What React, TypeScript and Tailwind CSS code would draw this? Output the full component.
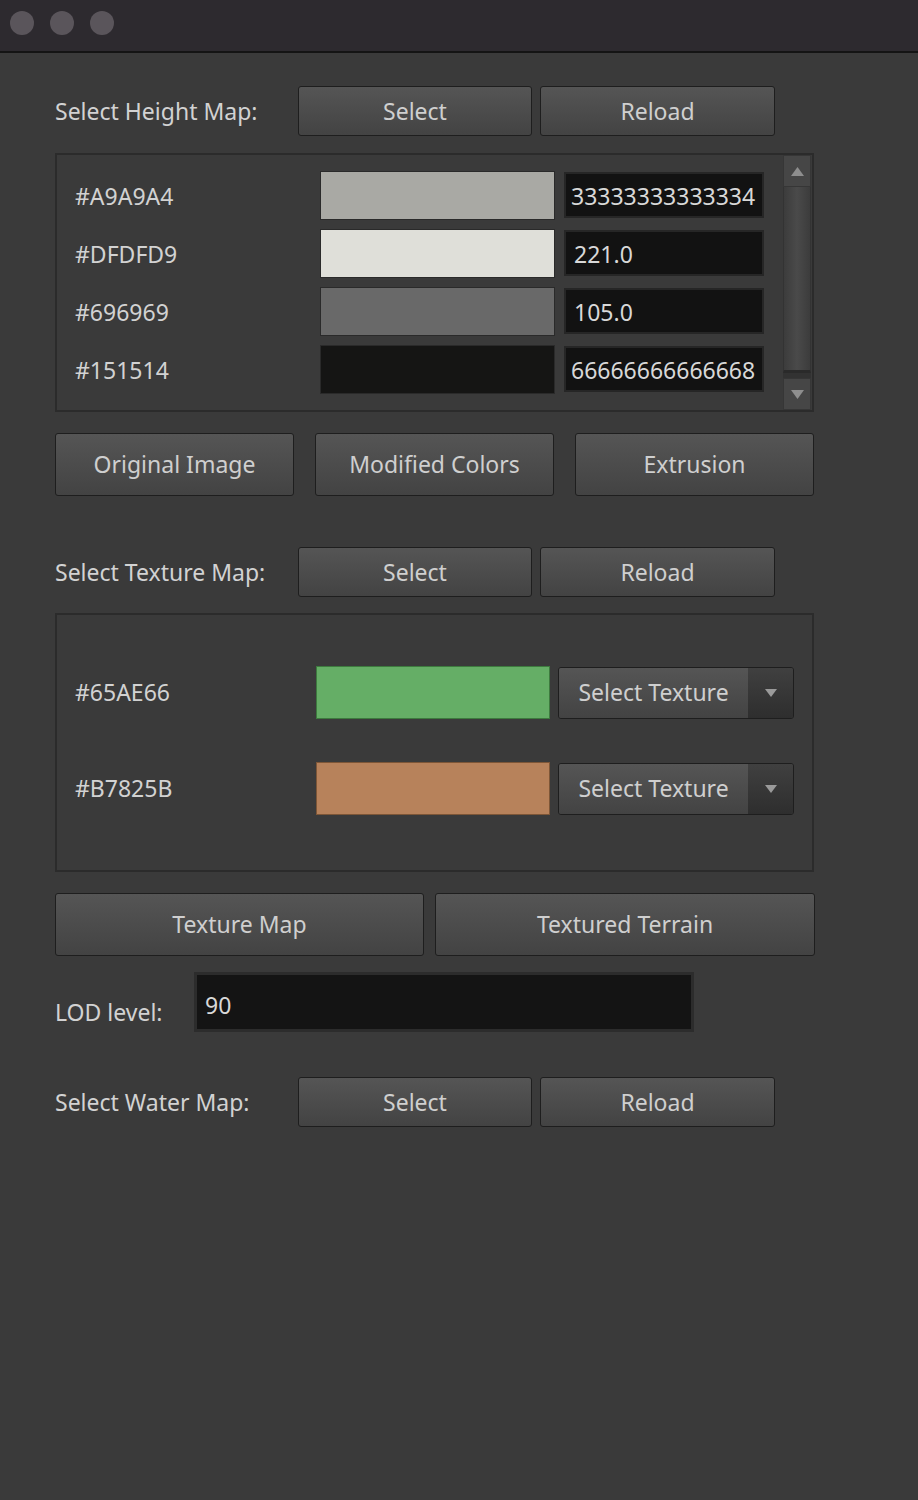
import React from "react";

const font = { fontFamily: '"Source Sans Pro", "Noto Sans", "Open Sans", sans-serif' };

function Btn({ children, className = "" }: { children: React.ReactNode; className?: string }) {
  return (
    <div
      className={`flex items-center justify-center rounded-[3px] border border-[#1e1e1e] bg-gradient-to-b from-[#555555] to-[#434343] text-[#cfcfcf] text-[23px] ${className}`}
    >
      {children}
    </div>
  );
}

function SelectRow({ label }: { label: string }) {
  return (
    <div className="flex items-center">
      <div className="w-[243px] text-[23px] text-[#d2d2d2]">{label}</div>
      <Btn className="w-[234px] h-[50px]">Select</Btn>
      <Btn className="ml-[8px] w-[235px] h-[50px]">Reload</Btn>
    </div>
  );
}

function HeightRow({ hex, color, value, padLeft }: { hex: string; color: string; value: string; padLeft: string }) {
  return (
    <div className="flex items-center h-[58px]">
      <div className="w-[263px] pl-[18px] pt-[2px] text-[23px] text-[#d2d2d2]">{hex}</div>
      <div className="w-[235px] h-[49px] border border-[#2a2a2a]" style={{ backgroundColor: color }} />
      <div className={`ml-[9px] w-[200px] h-[46px] border-[2px] border-[#262626] bg-[#121212] flex items-center ${padLeft} pt-[2px] text-[23px] text-[#d8d8d8] overflow-hidden whitespace-nowrap`}>
        {value}
      </div>
    </div>
  );
}

function TextureRow({ hex, color, border }: { hex: string; color: string; border: string }) {
  return (
    <div className="flex items-center h-[53px]">
      <div className="w-[259px] pl-[18px] text-[23px] text-[#d2d2d2]">{hex}</div>
      <div className={`w-[234px] h-[53px] border ${border}`} style={{ backgroundColor: color }} />
      <div className="ml-[8px] w-[236px] h-[52px] rounded-[3px] border border-[#1e1e1e] flex overflow-hidden">
        <div className="flex-1 flex items-center justify-center bg-gradient-to-b from-[#555555] to-[#434343] text-[23px] text-[#cfcfcf]">
          Select Texture
        </div>
        <div className="w-[45px] flex items-center justify-center bg-gradient-to-b from-[#404040] to-[#2e2e2e]">
          <svg width="14" height="10" viewBox="0 0 14 10">
            <path d="M1 1 L13 1 L7 9 Z" fill="#9a9a9a" />
          </svg>
        </div>
      </div>
    </div>
  );
}

export default function App() {
  return (
    <div className="w-[918px] h-[1500px] bg-[#3a3a3a] flex flex-col" style={font}>
      <div className="h-[53px] bg-[#2d2a2f] border-b-[2px] border-[#141414] flex items-start pt-[11px] pl-[10px] gap-[16px]">
        <div className="w-[24px] h-[24px] rounded-full bg-[#5a555b]" />
        <div className="w-[24px] h-[24px] rounded-full bg-[#5a555b]" />
        <div className="w-[24px] h-[24px] rounded-full bg-[#5a555b]" />
      </div>

      <div className="pl-[55px] flex flex-col">
        <div className="mt-[33px]">
          <SelectRow label="Select Height Map:" />
        </div>

        <div className="mt-[17px] w-[759px] h-[259px] border-[2px] border-[#2b2b2b] flex">
          <div className="flex-1 flex flex-col pt-[11px]">
            <HeightRow hex="#A9A9A4" color="#a9a9a4" value="33333333333334" padLeft="pl-[5px]" />
            <HeightRow hex="#DFDFD9" color="#dfdfd9" value="221.0" padLeft="pl-[8px]" />
            <HeightRow hex="#696969" color="#696969" value="105.0" padLeft="pl-[8px]" />
            <HeightRow hex="#151514" color="#151514" value="66666666666668" padLeft="pl-[5px]" />
          </div>
          <div className="w-[28px] mr-[1px] flex flex-col bg-[#323232]">
            <div className="h-[32px] bg-[#464646] border border-[#363636] flex items-center justify-center">
              <svg width="15" height="11" viewBox="0 0 15 11">
                <path d="M7.5 1 L14 10 L1 10 Z" fill="#8e8e8e" />
              </svg>
            </div>
            <div className="h-[186px] bg-gradient-to-r from-[#3c3c3c] via-[#4a4a4a] to-[#3c3c3c] border-x border-[#333] border-b-[3px] border-b-[#2a2a2a]" />
            <div className="flex-1" />
            <div className="h-[32px] bg-[#464646] border border-[#363636] flex items-center justify-center">
              <svg width="15" height="11" viewBox="0 0 15 11">
                <path d="M1 1 L14 1 L7.5 10 Z" fill="#8e8e8e" />
              </svg>
            </div>
          </div>
        </div>

        <div className="mt-[21px] flex gap-[21px]">
          <Btn className="w-[239px] h-[63px]">Original Image</Btn>
          <Btn className="w-[239px] h-[63px]">Modified Colors</Btn>
          <Btn className="w-[239px] h-[63px]">Extrusion</Btn>
        </div>

        <div className="mt-[51px]">
          <SelectRow label="Select Texture Map:" />
        </div>

        <div className="mt-[16px] w-[759px] h-[259px] border-[2px] border-[#2b2b2b] flex flex-col pt-[51px] gap-[43px]">
          <TextureRow hex="#65AE66" color="#65ae66" border="border-[#3d7a3e]" />
          <TextureRow hex="#B7825B" color="#b7825b" border="border-[#7d5637]" />
        </div>

        <div className="mt-[21px] flex gap-[11px]">
          <Btn className="w-[369px] h-[63px]">Texture Map</Btn>
          <Btn className="w-[380px] h-[63px]">Textured Terrain</Btn>
        </div>

        <div className="mt-[16px] flex items-end">
          <div className="w-[139px] text-[23px] text-[#d2d2d2] pb-[3px]">LOD level:</div>
          <div className="w-[500px] h-[60px] border-[3px] border-[#2c2c2c] bg-[#141414] flex items-start pt-[13px] pl-[8px] text-[23px] text-[#d8d8d8]">
            90
          </div>
        </div>

        <div className="mt-[45px]">
          <SelectRow label="Select Water Map:" />
        </div>
      </div>
    </div>
  );
}
